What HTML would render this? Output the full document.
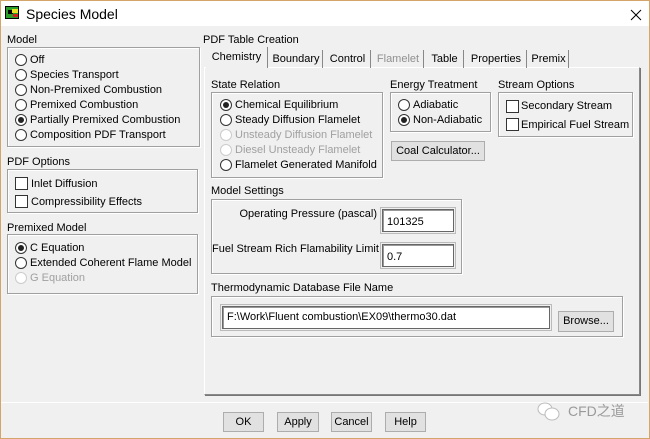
<!DOCTYPE html>
<html><head><meta charset="utf-8"><style>
*{box-sizing:border-box;margin:0;padding:0}
body{width:650px;height:439px;overflow:hidden;background:#f0f0f0;font-family:"Liberation Sans","Noto Sans CJK SC",sans-serif;font-size:11px;color:#000;position:relative}
.a{position:absolute;white-space:nowrap}
.frame{position:absolute;left:0;top:0;width:650px;height:439px;border:1px solid #d4a56a;border-top:none}
.title{position:absolute;left:0;top:0;width:650px;height:26px;background:#fff;border:1px solid #d4a56a;border-bottom:none}
.box{position:absolute;border:1px solid #a0a0a0;box-shadow:inset 1px 1px 0 #fff,1px 1px 0 #fff}
.r{position:absolute;width:12px;height:12px;border:1px solid #333;border-radius:50%;background:#fff}
.r.on::after{content:"";position:absolute;left:2px;top:2px;width:6px;height:6px;border-radius:50%;background:#222}
.r.dis{border-color:#ccc}
.c{position:absolute;width:13px;height:13px;border:1px solid #333;background:#fff}
.dis{color:#a0a0a0}
.btn{position:absolute;border:1px solid #adadad;background:#e1e1e1;text-align:center;line-height:18px}
.inp{position:absolute;border:1px solid #666;background:#fff;box-shadow:inset 1px 1px 0 #999;outline:1px solid #bbb;outline-offset:1px;padding:6px 0 0 4px}
.tab{position:absolute;top:50px;height:18px;border-right:1px solid #888;text-align:center;line-height:18px}
</style></head><body>
<div class="frame"></div>
<div class="title">
<div class="a" style="left:4px;top:5px;width:14px;height:13px;border:1px solid #000;background:#2a9d2a"><div style="position:absolute;left:2px;top:3px;width:5px;height:4px;background:#000"></div><div style="position:absolute;left:6px;top:2px;width:6px;height:4px;background:#e8e020"></div><div style="position:absolute;left:7px;top:7px;width:5px;height:3px;background:#d02020"></div></div>
<div class="a" style="left:25px;top:5px;font-size:14px">Species Model</div>
<svg class="a" style="left:629px;top:8px" width="12" height="12"><path d="M1 1L11 11M11 1L1 11" stroke="#000" stroke-width="1"/></svg>
</div>

<div class="a" style="left:7px;top:34px">Model</div>
<div class="box" style="left:7px;top:47px;width:193px;height:100px"></div>
<div class="r" style="left:15px;top:54px"></div><div class="a" style="left:30px;top:54px">Off</div>
<div class="r" style="left:15px;top:69px"></div><div class="a" style="left:30px;top:69px">Species Transport</div>
<div class="r" style="left:15px;top:84px"></div><div class="a" style="left:30px;top:84px">Non-Premixed Combustion</div>
<div class="r" style="left:15px;top:99px"></div><div class="a" style="left:30px;top:99px">Premixed Combustion</div>
<div class="r on" style="left:15px;top:114px"></div><div class="a" style="left:30px;top:114px">Partially Premixed Combustion</div>
<div class="r" style="left:15px;top:129px"></div><div class="a" style="left:30px;top:129px">Composition PDF Transport</div>

<div class="a" style="left:7px;top:156px">PDF Options</div>
<div class="box" style="left:7px;top:169px;width:191px;height:44px"></div>
<div class="c" style="left:15px;top:177px"></div><div class="a" style="left:31px;top:178px">Inlet Diffusion</div>
<div class="c" style="left:15px;top:195px"></div><div class="a" style="left:31px;top:196px">Compressibility Effects</div>

<div class="a" style="left:7px;top:222px">Premixed Model</div>
<div class="box" style="left:7px;top:234px;width:191px;height:60px"></div>
<div class="r on" style="left:15px;top:242px"></div><div class="a" style="left:30px;top:242px">C Equation</div>
<div class="r" style="left:15px;top:257px"></div><div class="a" style="left:30px;top:257px">Extended Coherent Flame Model</div>
<div class="r dis" style="left:15px;top:272px"></div><div class="a dis" style="left:30px;top:272px">G Equation</div>

<div class="a" style="left:203px;top:34px">PDF Table Creation</div>
<div class="a" style="left:204px;top:67px;width:436px;height:328px;border:1px solid #888;border-top-color:#fff;border-left-color:#fff;box-shadow:1px 1px 0 #777"></div>
<div class="a" style="left:206px;top:47px;width:62px;height:21px;background:#f0f0f0;border-right:1px solid #888;text-align:center;line-height:20px">Chemistry</div>
<div class="tab" style="left:270px;width:53px">Boundary</div>
<div class="tab" style="left:325px;width:46px">Control</div>
<div class="tab dis" style="left:373px;width:51px;color:#909090">Flamelet</div>
<div class="tab" style="left:426px;width:38px">Table</div>
<div class="tab" style="left:466px;width:61px">Properties</div>
<div class="tab" style="left:529px;width:40px">Premix</div>

<div class="a" style="left:211px;top:79px">State Relation</div>
<div class="box" style="left:211px;top:92px;width:172px;height:86px"></div>
<div class="r on" style="left:220px;top:99px"></div><div class="a" style="left:235px;top:99px">Chemical Equilibrium</div>
<div class="r" style="left:220px;top:114px"></div><div class="a" style="left:235px;top:114px">Steady Diffusion Flamelet</div>
<div class="r dis" style="left:220px;top:129px"></div><div class="a dis" style="left:235px;top:129px">Unsteady Diffusion Flamelet</div>
<div class="r dis" style="left:220px;top:144px"></div><div class="a dis" style="left:235px;top:144px">Diesel Unsteady Flamelet</div>
<div class="r" style="left:220px;top:159px"></div><div class="a" style="left:235px;top:159px">Flamelet Generated Manifold</div>

<div class="a" style="left:390px;top:79px">Energy Treatment</div>
<div class="box" style="left:390px;top:92px;width:101px;height:40px"></div>
<div class="r" style="left:398px;top:99px"></div><div class="a" style="left:413px;top:99px">Adiabatic</div>
<div class="r on" style="left:398px;top:114px"></div><div class="a" style="left:413px;top:114px">Non-Adiabatic</div>
<div class="btn" style="left:391px;top:141px;width:94px;height:20px">Coal Calculator...</div>

<div class="a" style="left:498px;top:79px">Stream Options</div>
<div class="box" style="left:498px;top:92px;width:135px;height:45px"></div>
<div class="c" style="left:506px;top:100px"></div><div class="a" style="left:521px;top:100px">Secondary Stream</div>
<div class="c" style="left:506px;top:118px"></div><div class="a" style="left:521px;top:119px">Empirical Fuel Stream</div>

<div class="a" style="left:211px;top:185px">Model Settings</div>
<div class="box" style="left:211px;top:199px;width:251px;height:75px"></div>
<div class="a" style="left:212px;top:208px;width:165px;text-align:right">Operating Pressure (pascal)</div>
<div class="inp" style="left:382px;top:209px;width:72px;height:23px">101325</div>
<div class="a" style="left:212px;top:243px;width:165px;text-align:right">Fuel Stream Rich Flamability Limit</div>
<div class="inp" style="left:382px;top:244px;width:72px;height:23px">0.7</div>

<div class="a" style="left:211px;top:282px">Thermodynamic Database File Name</div>
<div class="box" style="left:211px;top:296px;width:412px;height:41px"></div>
<div class="inp" style="left:222px;top:306px;width:328px;height:23px;padding-top:4px">F:\Work\Fluent combustion\EX09\thermo30.dat</div>
<div class="btn" style="left:558px;top:311px;width:56px;height:21px">Browse...</div>

<div class="a" style="left:1px;top:402px;width:647px;height:1px;background:#a0a0a0;border-bottom:1px solid #fff"></div>
<div class="btn" style="left:223px;top:412px;width:41px;height:20px">OK</div>
<div class="btn" style="left:277px;top:412px;width:42px;height:20px">Apply</div>
<div class="btn" style="left:331px;top:412px;width:41px;height:20px">Cancel</div>
<div class="btn" style="left:385px;top:412px;width:41px;height:20px">Help</div>
<svg class="a" style="left:536px;top:401px" width="26" height="22"><ellipse cx="9" cy="8" rx="7" ry="6" fill="#fff" stroke="#bbb"/><ellipse cx="16" cy="13" rx="7" ry="6" fill="#fff" stroke="#bbb"/></svg>
<div class="a" style="left:568px;top:401px;font-size:14px;color:#9a9a9a">CFD之道</div>
</body></html>
